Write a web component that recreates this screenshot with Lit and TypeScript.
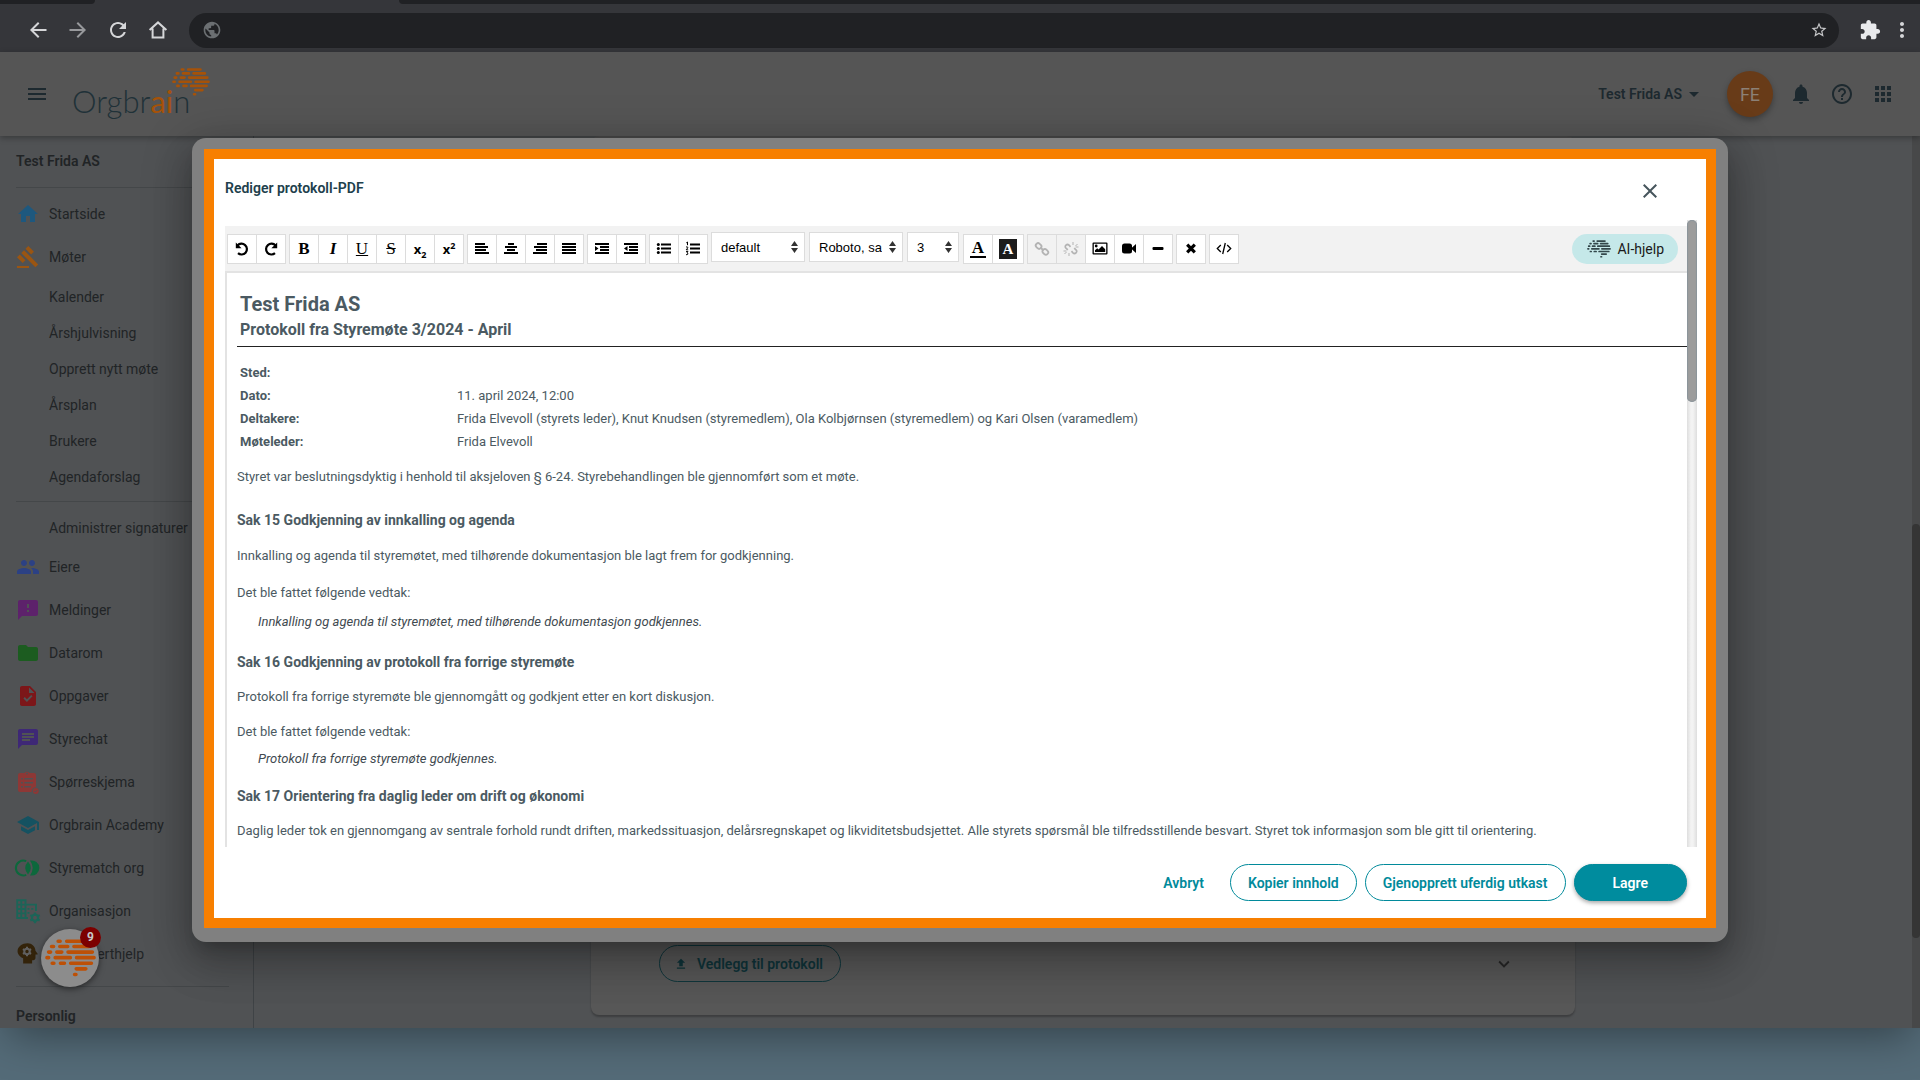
import { LitElement, html, css, svg } from "lit";
import { customElement, property } from "lit/decorators.js";

const PATHS: Record<string, string> = {
  menu: "M3 18h18v-2H3v2zm0-5h18v-2H3v2zm0-7v2h18V6H3z",
  back: "M20.5 11H7.83l5.59-5.59L12 4l-8 8 8 8 1.41-1.41L7.83 13H20.5v-2z",
  forward: "M12 4l-1.41 1.41L16.17 11H3.5v2h12.67l-5.58 5.59L12 20l8-8z",
  reload:
    "M17.65 6.35C16.2 4.9 14.21 4 12 4c-4.42 0-7.99 3.58-7.99 8s3.57 8 7.99 8c3.73 0 6.84-2.55 7.73-6h-2.08c-.82 2.33-3.04 4-5.65 4-3.31 0-6-2.69-6-6s2.69-6 6-6c1.66 0 3.14.69 4.22 1.78L13 11h7V4l-2.35 2.35z",
  globe:
    "M12 2C6.48 2 2 6.48 2 12s4.48 10 10 10 10-4.48 10-10S17.52 2 12 2zm-1 17.93c-3.95-.49-7-3.85-7-7.93 0-.62.08-1.21.21-1.79L9 15v1c0 1.1.9 2 2 2v1.93zm6.9-2.54c-.26-.81-1-1.39-1.9-1.39h-1v-3c0-.55-.45-1-1-1H8v-2h2c.55 0 1-.45 1-1V7h2c1.1 0 2-.9 2-2v-.41c2.93 1.19 5 4.06 5 7.41 0 2.08-.8 3.97-2.1 5.39z",
  star:
    "M22 9.24l-7.19-.62L12 2 9.19 8.63 2 9.24l5.46 4.73L5.82 21 12 17.27 18.18 21l-1.63-7.03L22 9.24zM12 15.4l-3.76 2.27 1-4.28-3.32-2.88 4.38-.38L12 6.1l1.71 4.04 4.38.38-3.32 2.88 1 4.28L12 15.4z",
  puzzle:
    "M20.5 11H19V7c0-1.1-.9-2-2-2h-4V3.5C13 2.12 11.88 1 10.5 1S8 2.12 8 3.5V5H4c-1.1 0-1.99.9-1.99 2v3.8H3.5c1.49 0 2.7 1.21 2.7 2.7s-1.21 2.7-2.7 2.7H2V20c0 1.1.9 2 2 2h3.8v-1.5c0-1.49 1.21-2.7 2.7-2.7 1.49 0 2.7 1.21 2.7 2.7V22H17c1.1 0 2-.9 2-2v-4h1.5c1.38 0 2.5-1.12 2.5-2.5S21.88 11 20.5 11z",
  more:
    "M12 8c1.1 0 2-.9 2-2s-.9-2-2-2-2 .9-2 2 .9 2 2 2zm0 2c-1.1 0-2 .9-2 2s.9 2 2 2 2-.9 2-2-.9-2-2-2zm0 6c-1.1 0-2 .9-2 2s.9 2 2 2 2-.9 2-2-.9-2-2-2z",
  bell:
    "M12 22c1.1 0 2-.9 2-2h-4c0 1.1.89 2 2 2zm6-6v-5c0-3.07-1.64-5.64-4.5-6.32V4c0-.83-.67-1.5-1.5-1.5s-1.5.67-1.5 1.5v.68C7.63 5.36 6 7.92 6 11v5l-2 2v1h16v-1l-2-2z",
  help:
    "M11 18h2v-2h-2v2zm1-16C6.48 2 2 6.48 2 12s4.48 10 10 10 10-4.48 10-10S17.52 2 12 2zm0 18c-4.41 0-8-3.59-8-8s3.59-8 8-8 8 3.59 8 8-3.59 8-8 8zm0-14c-2.21 0-4 1.79-4 4h2c0-1.1.9-2 2-2s2 .9 2 2c0 2-3 1.75-3 5h2c0-2.25 3-2.5 3-5 0-2.21-1.79-4-4-4z",
  apps:
    "M4 8h4V4H4v4zm6 12h4v-4h-4v4zm-6 0h4v-4H4v4zm0-6h4v-4H4v4zm6 0h4v-4h-4v4zm6-10v4h4V4h-4zm-6 4h4V4h-4v4zm6 6h4v-4h-4v4zm0 6h4v-4h-4v4z",
  close:
    "M19 6.41L17.59 5 12 10.59 6.41 5 5 6.41 10.59 12 5 17.59 6.41 19 12 13.41 17.59 19 19 17.59 13.41 12z",
  caret: "M7 10l5 5 5-5z",
  chevron: "M7.41 8.59L12 13.17l4.59-4.58L18 10l-6 6-6-6 1.41-1.41z",
  upload: "M5 20h14v-2H5v2zm0-10h4v6h6v-6h4l-7-7-7 7z",
  home: "M10 20v-6h4v6h5v-8h3L12 3 2 12h3v8z",
  gavel:
    "M1 21h12v2H1zM5.245 8.07l2.83-2.827 14.14 14.142-2.828 2.828zM12.317 1l5.657 5.656-2.83 2.83-5.654-5.66zM3.825 9.485l5.657 5.657-2.828 2.828-5.657-5.657z",
  people:
    "M16 11c1.66 0 2.99-1.34 2.99-3S17.66 5 16 5c-1.66 0-3 1.34-3 3s1.34 3 3 3zm-8 0c1.66 0 2.99-1.34 2.99-3S9.66 5 8 5C6.34 5 5 6.34 5 8s1.34 3 3 3zm0 2c-2.33 0-7 1.17-7 3.5V19h14v-2.5c0-2.33-4.67-3.5-7-3.5zm8 0c-.29 0-.62.02-.97.05 1.16.84 1.97 1.97 1.97 3.45V19h6v-2.5c0-2.33-4.67-3.5-7-3.5z",
  feedback:
    "M20 2H4c-1.1 0-1.99.9-1.99 2L2 22l4-4h14c1.1 0 2-.9 2-2V4c0-1.1-.9-2-2-2zm-7 12h-2v-2h2v2zm0-4h-2V6h2v4z",
  folder:
    "M10 4H4c-1.1 0-1.99.9-1.99 2L2 18c0 1.1.9 2 2 2h16c1.1 0 2-.9 2-2V8c0-1.1-.9-2-2-2h-8l-2-2z",
  task:
    "M14 2H6c-1.1 0-1.99.9-1.99 2L4 20c0 1.1.89 2 1.99 2H18c1.1 0 2-.9 2-2V8l-6-6zm-3.06 16L7.4 14.46l1.41-1.41 2.12 2.12 4.24-4.24 1.41 1.41L10.94 18zM13 9V3.5L18.5 9H13z",
  chat:
    "M20 2H4c-1.1 0-1.99.9-1.99 2L2 22l4-4h14c1.1 0 2-.9 2-2V4c0-1.1-.9-2-2-2zM6 9h12v2H6V9zm8 5H6v-2h8v2zm4-6H6V6h12v2z",
  school: "M5 13.18v4L12 21l7-3.82v-4L12 17l-7-3.82zM12 3 1 9l11 6 9-4.91V17h2V9L12 3z",
};

const DRAWN: Record<string, unknown> = {
  homeOutline: svg`<path d="M3.6 12 12 4.4 20.4 12M6.6 10.5V19.6H17.4V10.5" fill="none" stroke="currentColor" stroke-width="2"/>`,
  survey: svg`<path fill-rule="evenodd" d="M4 3H8.6A2.8 2.8 0 0 1 13.4 3H18Q20 3 20 5V17.2A4 4 0 0 0 15.6 22H4Q2 22 2 20V5Q2 3 4 3ZM11 2.4A1 1 0 1 0 11 4.4 1 1 0 0 0 11 2.4ZM5 8V9.6H6.8V8ZM8.4 8V9.6H17V8ZM5 12V13.6H6.8V12ZM8.4 12V13.6H17V12ZM5 16V17.6H6.8V16ZM8.4 16V17.6H15V16Z"/><circle cx="19.8" cy="21" r="2.9"/><path d="M18.3 21l1 1 2-2" stroke="#505254" fill="none"/>`,
  match: svg`<path d="M10.2 5.2A7.4 7.4 0 1 0 10.2 18.800" fill="none" stroke="currentColor" stroke-width="2"/><path d="M12 5.6Q17.6 12 12 18.4 6.4 12 12 5.6Z"/><path d="M14 4.6A7.6 7.6 0 1 1 14 19.4Q19.4 12 14 4.6Z"/>`,
  org: svg`<path d="M1.2 1.2H9.5V19H1.2ZM5.3 1V19M1 5.6H9.5M1 10H9.5M1 14.4H9.5M9.5 5.6H20V12M12 19H9.5" fill="none" stroke="currentColor" stroke-width="1.9"/><path d="M11.5 9h2v1.8h-2zM15.3 9h2v1.8h-2zM11.5 13h2v1.8h-2z"/><circle cx="19" cy="18.8" r="3.1" fill="none" stroke="currentColor" stroke-width="2.2"/><path d="M19 13.4v2M19 22.2v2M14.3 16.1l1.7 1M22 20.500l1.700 1M14.300 21.500l1.700-1M22 17.100l1.700-1" stroke="currentColor" stroke-width="2.2"/>`,
  mind: svg`<path transform="translate(26.200 -2) scale(-1.120 1.120)" d="M13 3C9.250 3 6.200 5.940 6.020 9.640L4.100 12.200c-.25.33-.01.8.4.8H6v3c0 1.100.9 2 2 2h1v3h8v-4.680c2.600-1.120 5-3.530 5-6.320 0-3.870-4.130-7-9-7z"/><circle cx="11" cy="9.500" r="2.700" fill="none" stroke="#606060" stroke-width="2"/><path d="M11 4.800v2.200M11 12v2.200M6.900 7.200l2 1.100M13.100 10.700l2 1.100M6.900 11.800l2-1.100M13.100 8.300l2-1.100" stroke="#606060" stroke-width="2"/>`,
};

const TOOLS: Record<string, unknown> = {
  undo: svg`<path d="M3.500 4.500A5.400 5.400 0 1 1 4 12.200" fill="none" stroke="currentColor" stroke-width="2.200"/><path d="M1.800 1.500V7.300H7.600Z"/>`,
  redo: svg`<path d="M12.500 4.500A5.400 5.400 0 1 0 12 12.200" fill="none" stroke="currentColor" stroke-width="2.200"/><path d="M14.200 1.500V7.300H8.400Z"/>`,
  left: svg`<path d="M1 2h10v2H1zM1 5h13v2H1zM1 8h11v2H1zM1 11h14v2H1z"/>`,
  center: svg`<path d="M5 2h6v2H5zM2 5h12v2H2zM4 8h8v2H4zM1 11h14v2H1z"/>`,
  right: svg`<path d="M5 2h10v2H5zM2 5h13v2H2zM4 8h11v2H4zM1 11h14v2H1z"/>`,
  justify: svg`<path d="M1 2h14v2H1zM1 5h14v2H1zM1 8h14v2H1zM1 11h14v2H1z"/>`,
  indent: svg`<path d="M1 2h14v2H1zM6 5h9v2H6zM6 8h9v2H6zM1 11h14v2H1zM1 5l3.500 2.500L1 10z"/>`,
  outdent: svg`<path d="M1 2h14v2H1zM6 5h9v2H6zM6 8h9v2H6zM1 11h14v2H1zM4.500 5L1 7.500 4.500 10z"/>`,
  bullets: svg`<path d="M5 2.500h10v2H5zM5 6.500h10v2H5zM5 10.500h10v2H5z"/><circle cx="2.300" cy="3.500" r="1.500"/><circle cx="2.300" cy="7.500" r="1.500"/><circle cx="2.300" cy="11.500" r="1.500"/>`,
  numbers: svg`<path d="M5 2.500h10v2H5zM5 6.500h10v2H5zM5 10.500h10v2H5z"/><path d="M1.300 1.800l1.200-.8V4.200M1 6Q3 5.400 2.800 6.800L1.200 8.800H3.200M1 10.600H3L2 11.800Q3.300 12 2.800 13.200 2 14.200 1 13.500" fill="none" stroke="currentColor"/>`,
  link: svg`<g fill="none" stroke="currentColor" stroke-width="1.800"><rect x="-2.700" y="-2" width="6" height="4.600" rx="2.200" transform="translate(4.600 4.600) rotate(45)"/><rect x="-3" y="-2.400" width="6" height="4.600" rx="2.200" transform="translate(11.300 11) rotate(45)"/><path d="M6.500 6.500l3 3"/></g>`,
  unlink: svg`<g fill="none" stroke="currentColor" stroke-width="1.700"><path d="M7.500 5.800L6 4.200Q4.500 2.800 3 4.200T3 7.200L4.800 8.800M8.500 10.200L10 11.800Q11.500 13.200 13 11.800T13 8.800L11.200 7.200"/><path d="M10 1v3M12.500 5l2-2M12.500 6h3M6 15v-3M3.500 11l-2 2M3.500 10h-3" stroke-width="1"/></g>`,
  image: svg`<path fill-rule="evenodd" d="M1.500 1.500h13q1 0 1 1v10q0 1-1 1h-13q-1 0-1-1v-10q0-1 1-1zM1.800 2.800v9.400h12.400V2.800z"/><circle cx="4.200" cy="5" r="1.400"/><path d="M3 11V9.200l2.200-2 1.300 1.300L10 5l3.200 3.200V11z"/>`,
  video: svg`<rect x="1" y="2.500" width="10" height="10" rx="2.500"/><path d="M10 7.500L15 3v9z"/>`,
  minus: svg`<rect x="2.500" y="6" width="11" height="3" rx="1"/>`,
  times: svg`<path d="M4.200 3.700l7.600 7.600M11.800 3.700l-7.600 7.600" stroke="currentColor" stroke-width="3.200"/>`,
  code: svg`<path d="M4.800 4L1.300 7.500l3.500 3.500M11.200 4l3.500 3.500-3.500 3.500M9.300 2L6.700 13" fill="none" stroke="currentColor" stroke-width="1.300"/>`,
};

@customElement("ui-icon")
class UiIcon extends LitElement {
  @property() name = "";
  static styles = css`
    :host { display: inline-flex; width: 24px; height: 24px; flex: none; }
    .glyph { width: 100%; height: 100%; fill: currentColor; overflow: visible; }
  `;
  render() {
    const tool = TOOLS[this.name];
    return tool
      ? html`<svg class="glyph" viewBox="0 0 16 15" aria-hidden="true">${tool}</svg>`
      : html`<svg class="glyph" viewBox="0 0 24 24" aria-hidden="true">
          ${DRAWN[this.name] ?? svg`<path d=${PATHS[this.name]} />`}
        </svg>`;
  }
}

@customElement("brain-mark")
class BrainMark extends LitElement {
  static styles = css`
    :host { display: inline-flex; flex: none; }
    .glyph { width: 100%; height: 100%; stroke: currentColor; stroke-width: 11; stroke-linecap: round; }
  `;
  render() {
    return html`<svg class="glyph" viewBox="0 0 155 114" aria-hidden="true">
      <path d="M40 6h6M66 6h50M20 22h6M45 22h24M88 22h46M11 39h6M36 39h15M70 39h74M6 56h5M31 56h46M96 56h53M22 73h5M47 73h12M78 73h63M95 90h29M90 107h4" />
    </svg>`;
  }
}

interface NavItem { label: string; icon?: string; tone?: string; }

const NAV_TOP: NavItem[] = [
  { label: "Startside", icon: "home", tone: "sky" },
  { label: "Møter", icon: "gavel", tone: "amber" },
];
const NAV_SUB = ["Kalender", "Årshjulvisning", "Opprett nytt møte", "Årsplan", "Brukere", "Agendaforslag"];
const NAV_REST: NavItem[] = [
  { label: "Eiere", icon: "people", tone: "blue" },
  { label: "Meldinger", icon: "feedback", tone: "purple" },
  { label: "Datarom", icon: "folder", tone: "green" },
  { label: "Oppgaver", icon: "task", tone: "red" },
  { label: "Styrechat", icon: "chat", tone: "violet" },
  { label: "Spørreskjema", icon: "survey", tone: "rose" },
  { label: "Orgbrain Academy", icon: "school", tone: "petrol" },
  { label: "Styrematch org", icon: "match", tone: "emerald" },
  { label: "Organisasjon", icon: "org", tone: "teal" },
  { label: "Få eksperthjelp", icon: "mind", tone: "brown" },
];

@customElement("browser-bar")
class BrowserBar extends LitElement {
  static styles = css`
    :host { display: block; background: #35363a; color: #d5d6d8; }
    .tabs { display: flex; height: 4px; background: #35363a; }
    .tab { background: #202124; }
    .first { width: 95px; border-bottom-right-radius: 4px; }
    .active { width: 304px; background: #35363a; }
    .others { flex: 1; border-bottom-left-radius: 4px; }
    .bar { display: flex; align-items: center; height: 48px; padding: 4px 6px 0 26px; box-sizing: border-box; }
    .tool { display: flex; border: 0; background: none; padding: 0; color: inherit; }
    .nav { display: flex; gap: 16px; margin-right: 19px; }
    .dim { color: #98999c; }
    .omnibox { flex: 1; display: flex; align-items: center; gap: 8px; height: 35px; padding: 0 11px 0 13px; border-radius: 18px; background: #202124; margin-right: 20px; }
    .omnibox ui-icon { width: 20px; height: 20px; color: #6b6f72; }
    .omnibox .tool ui-icon { width: 18px; height: 18px; color: #c6c7c9; }
    .field { flex: 1; min-width: 0; border: 0; outline: 0; background: none; color: #e8eaed; font: 14px Roboto, sans-serif; }
    .ext { width: 22px; height: 22px; color: #e9eaec; }
    .end { display: flex; gap: 9px; align-items: center; }
  `;
  render() {
    return html`
      <div class="tabs"><div class="tab first"></div><div class="tab active"></div><div class="tab others"></div></div>
      <div class="bar">
        <div class="nav">
          <button class="tool" aria-label="Tilbake"><ui-icon name="back"></ui-icon></button>
          <button class="tool dim" aria-label="Frem"><ui-icon name="forward"></ui-icon></button>
          <button class="tool" aria-label="Last inn"><ui-icon name="reload"></ui-icon></button>
          <button class="tool" aria-label="Hjem"><ui-icon name="homeOutline"></ui-icon></button>
        </div>
        <div class="omnibox">
          <ui-icon name="globe"></ui-icon>
          <input class="field" type="text" aria-label="Adresse" />
          <button class="tool" aria-label="Bokmerke"><ui-icon name="star"></ui-icon></button>
        </div>
        <div class="end">
          <button class="tool" aria-label="Utvidelser"><ui-icon class="ext" name="puzzle"></ui-icon></button>
          <button class="tool" aria-label="Meny"><ui-icon name="more"></ui-icon></button>
        </div>
      </div>
    `;
  }
}

@customElement("app-header")
class AppHeader extends LitElement {
  static styles = css`
    :host { display: flex; align-items: center; height: 84px; padding: 0 25px; background: #555; color: #1d292f; font-family: Roboto, sans-serif; box-shadow: 0 2px 6px rgba(0, 0, 0, 0.3); position: relative; }
    .tool { display: flex; border: 0; background: none; padding: 0; color: inherit; font: inherit; }
    .logo { display: flex; align-items: flex-start; margin-left: 23px; color: #203138; text-decoration: none; }
    .word { font: 300 31px/40px Lato, sans-serif; padding-top: 13px; }
    .accent { font-weight: 400; }
    .accent, brain-mark { color: #a65208; }
    brain-mark { width: 38px; height: 28px; margin-left: -18px; }
    .actions { display: flex; align-items: center; margin-left: auto; }
    .org { align-items: center; font-size: 14px; font-weight: 600; margin-right: 21px; }
    .avatar { display: grid; place-items: center; width: 46px; height: 46px; border-radius: 50%; background: #683b18; color: #8c8075; font-size: 18px; box-shadow: 0 3px 6px rgba(0, 0, 0, 0.3); margin-right: 16px; border: 0; padding: 0; font-family: inherit; }
    .icons { display: flex; gap: 17px; }
  `;
  render() {
    return html`
      <button class="tool" aria-label="Meny"><ui-icon name="menu"></ui-icon></button>
      <a class="logo" href="#"><span class="word">Orgbr<span class="accent">ai</span>n</span><brain-mark></brain-mark></a>
      <div class="actions">
        <button class="tool org">Test Frida AS<ui-icon name="caret"></ui-icon></button>
        <button class="avatar">FE</button>
        <div class="icons">
          <button class="tool" aria-label="Varsler"><ui-icon name="bell"></ui-icon></button>
          <button class="tool" aria-label="Hjelp"><ui-icon name="help"></ui-icon></button>
          <button class="tool" aria-label="Apper"><ui-icon name="apps"></ui-icon></button>
        </div>
      </div>
    `;
  }
}

@customElement("side-nav")
class SideNav extends LitElement {
  static styles = css`
    :host { display: block; width: 253px; flex: none; box-sizing: content-box; padding: 0; border-right: 1px solid #3f4346; color: #212426; font: 14px/20px Roboto, sans-serif; overflow: hidden; }
    .list { display: flex; flex-direction: column; padding: 0 24px 0 16px; }
    .title { font-weight: 600; padding: 15px 0 16px; }
    .rule { border: 0; border-top: 1px solid #444749; margin: 0; }
    .item { display: flex; align-items: center; gap: 9px; height: 41px; padding-bottom: 2px; color: inherit; text-decoration: none; white-space: nowrap; }
    .sub { height: 36px; padding: 0 0 0 33px; }
    .first { margin-top: 5px; }
    .gap { margin: 6px 0 8px; }
    .end { margin: 10px 0 4px; }
    .sky { color: #1e587e; } .amber { color: #9a5512; } .blue { color: #2c4184; } .purple { color: #5d226b; }
    .green { color: #1c5c20; } .red { color: #7c1619; } .violet { color: #3e2876; } .rose { color: #8d3836; }
    .petrol { color: #155261; } .emerald { color: #0d683c; } .teal { color: #1c6558; } .brown { color: #33230a; }
  `;
  private item(i: NavItem, first = false) {
    return html`<a class="item ${first ? "first" : ""}" href="#"><ui-icon class=${i.tone!} name=${i.icon!}></ui-icon>${i.label}</a>`;
  }
  render() {
    return html`<nav class="list">
      <div class="title">Test Frida AS</div>
      <hr class="rule" />
      ${NAV_TOP.map((i, n) => this.item(i, n === 0))}
      ${NAV_SUB.map((l) => html`<a class="item sub" href="#">${l}</a>`)}
      <hr class="rule gap" />
      <a class="item sub" href="#">Administrer signaturer</a>
      ${NAV_REST.map((i) => this.item(i))}
      <hr class="rule end" />
      <div class="title">Personlig</div>
    </nav>`;
  }
}

@customElement("editor-toolbar")
class EditorToolbar extends LitElement {
  static styles = css`
    :host { display: flex; align-items: center; gap: 4px; height: 45px; padding: 0 9px 0 2px; background: #f2f2f2; border-bottom: 2px solid #e3e3e3; }
    .group { display: flex; }
    .btn { display: grid; place-items: center; box-sizing: border-box; width: 30px; height: 30px; margin-right: -1px; padding: 0; border: 1px solid #dcdcdc; background: #fff; color: #000; font: 700 17px/1 "Liberation Serif", serif; }
    .btn ui-icon { width: 16px; height: 15px; }
    .btn:disabled { background: #f2f2f2; color: #b3b3b3; }
    .wide { width: 32px; }
    .regular { font-weight: 400; }
    .italic { font-style: italic; }
    .under { text-decoration: underline; }
    .strike { text-decoration: line-through; }
    .script { font: 700 13px/14px "Noto Sans", sans-serif; }
    .mini { font-size: 9px; line-height: 0; }
    .fore { border-bottom: 2px solid #000; padding: 0 2px; font-size: 17px; line-height: 17px; }
    .back { background: #1c1c1c; color: #fff; width: 18px; font-size: 15px; line-height: 20px; }
    .pick { display: flex; align-items: center; margin-bottom: 3px; background: #fff; border: 1px solid #dcdcdc; box-sizing: border-box; width: 94px; height: 30px; padding-right: 6px; }
    .small { width: 52px; }
    .select { appearance: none; flex: 1; min-width: 0; height: 28px; border: 0; background: none; color: #000; padding: 0 7px 0 9px; font: 13px "Liberation Sans", Arial, sans-serif; overflow: hidden; }
    .arrows { width: 7px; height: 12px; flex: none; fill: #333; }
    .ai { display: flex; align-items: center; gap: 6px; margin-left: auto; height: 30px; padding: 0 14px 0 15px; border: 0; border-radius: 15px; background: #c5e8e9; color: #1a1a1a; font: 14px Roboto, sans-serif; }
    .ai brain-mark { width: 24px; height: 18px; color: #33474b; }
  `;
  private icons(names: string[], off: string[] = []) {
    return html`<div class="group">
      ${names.map((n) => html`<button class="btn" aria-label=${n} ?disabled=${off.includes(n)}><ui-icon name=${n}></ui-icon></button>`)}
    </div>`;
  }
  private pick(label: string, options: string[], small = false) {
    return html`<div class="pick ${small ? "small" : ""}">
      <select class="select" aria-label=${label}>${options.map((o) => html`<option>${o}</option>`)}</select>
      <svg class="arrows" viewBox="0 0 7 12" aria-hidden="true"><path d="M3.500 0L7 5H0zM0 7h7L3.500 12z" /></svg>
    </div>`;
  }
  render() {
    return html`
      ${this.icons(["undo", "redo"])}
      <div class="group">
        <button class="btn">B</button>
        <button class="btn italic">I</button>
        <button class="btn regular under">U</button>
        <button class="btn regular strike">S</button>
        <button class="btn script"><span>x<sub class="mini">2</sub></span></button>
        <button class="btn script"><span>x<sup class="mini">2</sup></span></button>
      </div>
      ${this.icons(["left", "center", "right", "justify"])}
      ${this.icons(["indent", "outdent"])}
      ${this.icons(["bullets", "numbers"])}
      ${this.pick("Format", ["default"])}
      ${this.pick("Skrift", ["Roboto, sans-serif"])}
      ${this.pick("Størrelse", ["3"], true)}
      <div class="group">
        <button class="btn"><span class="fore">A</span></button>
        <button class="btn wide"><span class="back">A</span></button>
      </div>
      ${this.icons(["link", "unlink", "image", "video", "minus"], ["link", "unlink"])}
      ${this.icons(["times"])}
      ${this.icons(["code"])}
      <button class="ai"><brain-mark></brain-mark>AI-hjelp</button>
    `;
  }
}

@customElement("protocol-document")
class ProtocolDocument extends LitElement {
  static styles = css`
    :host { display: block; color: #4b5a62; font: 13px/20px Roboto, sans-serif; border-left: 2px solid #e3e3e3; padding: 17px 0 0 10px; }
    .head { padding: 0 0 4px 3px; border-bottom: 1px solid #222; }
    .name { margin: 0; font-size: 20px; line-height: 28px; font-weight: 700; }
    .meeting { margin: 0; font-size: 16px; line-height: 24px; font-weight: 700; }
    .facts { border-spacing: 0; margin: 14px 0 14px 3px; line-height: 23px; }
    .facts th { width: 217px; padding: 0; text-align: left; font-weight: 700; }
    .facts td { padding: 0; height: 23px; }
    .text { margin: 0 0 15px; }
    .text.lead { margin-bottom: 23px; }
    .case { margin: 0 0 15px; font-size: 14px; line-height: 20px; font-weight: 700; }
    .text.intro { margin-bottom: 7px; }
    .decision { margin: 0 0 17px 21px; font-style: italic; color: #3f4a50; }
    .roomy .case { margin-bottom: 16px; }
    .roomy .text { margin-bottom: 17px; }
    .roomy .text.intro { margin-bottom: 9px; }
    .roomy .decision { margin-bottom: 20px; }
  `;
  render() {
    return html`
      <header class="head">
        <h1 class="name">Test Frida AS</h1>
        <h2 class="meeting">Protokoll fra Styremøte 3/2024 - April</h2>
      </header>
      <table class="facts">
        <tr><th>Sted:</th><td></td></tr>
        <tr><th>Dato:</th><td>11. april 2024, 12:00</td></tr>
        <tr><th>Deltakere:</th><td>Frida Elvevoll (styrets leder), Knut Knudsen (styremedlem), Ola Kolbjørnsen (styremedlem) og Kari Olsen (varamedlem)</td></tr>
        <tr><th>Møteleder:</th><td>Frida Elvevoll</td></tr>
      </table>
      <p class="text lead">Styret var beslutningsdyktig i henhold til aksjeloven § 6-24. Styrebehandlingen ble gjennomført som et møte.</p>
      <section class="roomy">
        <h3 class="case">Sak 15 Godkjenning av innkalling og agenda</h3>
        <p class="text">Innkalling og agenda til styremøtet, med tilhørende dokumentasjon ble lagt frem for godkjenning.</p>
        <p class="text intro">Det ble fattet følgende vedtak:</p>
        <p class="decision">Innkalling og agenda til styremøtet, med tilhørende dokumentasjon godkjennes.</p>
      </section>
      <section>
        <h3 class="case">Sak 16 Godkjenning av protokoll fra forrige styremøte</h3>
        <p class="text">Protokoll fra forrige styremøte ble gjennomgått og godkjent etter en kort diskusjon.</p>
        <p class="text intro">Det ble fattet følgende vedtak:</p>
        <p class="decision">Protokoll fra forrige styremøte godkjennes.</p>
      </section>
      <section>
        <h3 class="case">Sak 17 Orientering fra daglig leder om drift og økonomi</h3>
        <p class="text">Daglig leder tok en gjennomgang av sentrale forhold rundt driften, markedssituasjon, delårsregnskapet og likviditetsbudsjettet. Alle styrets spørsmål ble tilfredsstillende besvart. Styret tok informasjon som ble gitt til orientering.</p>
      </section>
    `;
  }
}

@customElement("protocol-dialog")
class ProtocolDialog extends LitElement {
  static styles = css`
    :host { display: flex; box-sizing: border-box; padding: 11px 12px 14px; border-radius: 14px; background: #808080; box-shadow: 0 11px 15px -7px rgba(0, 0, 0, 0.2), 0 24px 38px 3px rgba(0, 0, 0, 0.14), 0 9px 46px 8px rgba(0, 0, 0, 0.2); font-family: Roboto, sans-serif; }
    .frame { flex: 1; min-width: 0; display: flex; flex-direction: column; border: 10px solid #f77f00; background: #fff; }
    .top { display: flex; justify-content: space-between; height: 61px; box-sizing: border-box; padding: 19px 45px 0 11px; }
    .title { margin: 0; font-size: 14px; line-height: 20px; font-weight: 600; color: #21404c; }
    .close { display: flex; align-self: flex-start; border: 0; background: none; padding: 2px 0 0; color: #46555c; }
    .close ui-icon { width: 24px; height: 24px; margin: -1px; }
    .scroller { flex: 1; min-height: 0; display: flex; padding: 0 9px 0 11px; }
    .editor { flex: 1; min-width: 0; display: flex; flex-direction: column; padding-top: 6px; overflow: hidden; }
    editor-toolbar { flex: none; }
    protocol-document { flex: 1; }
    .track { width: 10px; background: linear-gradient(90deg, #dedede, #f3f3f3 40%, #f3f3f3 60%, #dedede); }
    .thumb { width: 10px; height: 29%; border-radius: 5px; background: #9c9c9c; box-shadow: inset 0 0 1px 1px #8b959c; }
    .actions { display: flex; justify-content: flex-end; align-items: flex-start; gap: 8px; padding: 17px 19px; }
    .btn { box-sizing: border-box; height: 37px; padding: 0 17px; border: 1px solid #018a9b; border-radius: 19px; background: #fff; color: #018a9b; font: 600 14px Roboto, sans-serif; }
    .plain { border-color: transparent; }
    .solid { background: #008c9e; color: #fff; padding: 0 38px; box-shadow: 0 2px 4px rgba(0, 0, 0, 0.35); }
  `;
  render() {
    return html`<div class="frame" role="dialog" aria-labelledby="title">
      <div class="top">
        <h2 class="title" id="title">Rediger protokoll-PDF</h2>
        <button class="close" aria-label="Lukk"><ui-icon name="close"></ui-icon></button>
      </div>
      <div class="scroller">
        <div class="editor">
          <editor-toolbar></editor-toolbar>
          <protocol-document></protocol-document>
        </div>
        <div class="track"><div class="thumb"></div></div>
      </div>
      <div class="actions">
        <button class="btn plain">Avbryt</button>
        <button class="btn">Kopier innhold</button>
        <button class="btn">Gjenopprett uferdig utkast</button>
        <button class="btn solid">Lagre</button>
      </div>
    </div>`;
  }
}

@customElement("app-root")
class AppRoot extends LitElement {
  static styles = css`
    :host { display: flex; flex-direction: column; height: 100vh; box-sizing: border-box; padding-bottom: 52px; background: #546b78; overflow: hidden; font-family: Roboto, sans-serif; }
    .window { position: relative; flex: 1; min-height: 0; display: flex; flex-direction: column; background: #505254; box-shadow: 0 16px 40px -8px rgba(0, 0, 0, 0.38); }
    .body { flex: 1; min-height: 0; display: flex; }
    .main { flex: 1; min-width: 0; display: flex; justify-content: center; padding-bottom: 13px; }
    .card { width: 984px; box-sizing: border-box; display: flex; align-items: flex-end; justify-content: space-between; padding: 0 60px 33px 68px; border-radius: 8px; background: #575757; box-shadow: 0 2px 2px rgba(0, 0, 0, 0.25); }
    .attach { display: flex; align-items: center; gap: 9px; box-sizing: border-box; height: 37px; padding: 0 17px 0 14px; border: 1px solid #10363c; border-radius: 19px; background: none; color: #0f3339; font: 600 14px Roboto, sans-serif; }
    .attach ui-icon { width: 14px; height: 14px; }
    .expand { display: flex; border: 0; background: none; padding: 0 0 6px; color: #262626; }
    .expand ui-icon { width: 22px; height: 24px; }
    .track { width: 8px; background: #474849; display: flex; flex-direction: column; }
    .before { height: 388px; }
    .thumb { flex: 1; background: #353535; border-radius: 4px; margin-bottom: 90px; }
    .dialog { position: absolute; inset: 138px 10% 86px; }
    .assistant { position: absolute; left: 41px; bottom: 41px; display: grid; place-items: center; width: 58px; height: 58px; border: 0; border-radius: 50%; padding: 0; background: #8c8c8c; color: #bd5006; box-shadow: 0 2px 6px rgba(0, 0, 0, 0.5); }
    .assistant brain-mark { width: 51px; height: 38px; }
    .badge { position: absolute; top: -2px; right: -2px; width: 21px; border-radius: 50%; background: #7c0000; color: #c8c8c8; font: 700 12px/21px Roboto, sans-serif; text-align: center; }
  `;
  render() {
    return html`
      <div class="window">
        <browser-bar></browser-bar>
        <app-header></app-header>
        <div class="body">
          <side-nav></side-nav>
          <main class="main">
            <section class="card">
              <button class="attach"><ui-icon name="upload"></ui-icon>Vedlegg til protokoll</button>
              <button class="expand" aria-label="Vis mer"><ui-icon name="chevron"></ui-icon></button>
            </section>
          </main>
          <div class="track"><div class="before"></div><div class="thumb"></div></div>
        </div>
        <button class="assistant" aria-label="Assistent"><brain-mark></brain-mark><span class="badge">9</span></button>
        <protocol-dialog class="dialog"></protocol-dialog>
      </div>
    `;
  }
}
